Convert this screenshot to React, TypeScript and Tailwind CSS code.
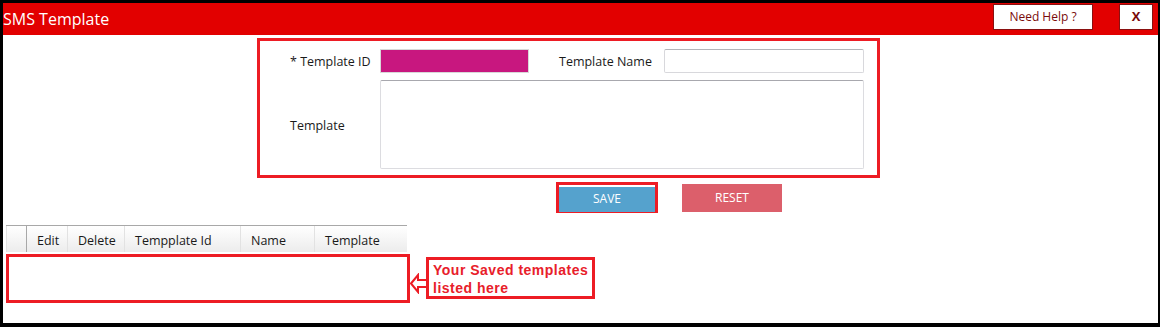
import { useState } from 'react';

const columns = [
  { label: '', width: 'w-[20px]' },
  { label: 'Edit', width: 'w-[41px]' },
  { label: 'Delete', width: 'w-[57px]' },
  { label: 'Tempplate Id', width: 'w-[116px]' },
  { label: 'Name', width: 'w-[74px]' },
  { label: 'Template', width: 'w-[93px]' },
];

export default function App() {
  const [name, setName] = useState('');
  const [body, setBody] = useState('');

  return (
    <div
      className="w-[1160px] h-[327px] bg-black pt-[3px] pl-[3px] pr-[2px] pb-[4px]"
      style={{ fontFamily: '"Open Sans", "Noto Sans", sans-serif' }}
    >
      <div className="h-full bg-white flex flex-col">
        {/* title bar */}
        <div className="h-[32px] shrink-0 bg-[#e20000] flex items-start pt-[1px] pr-[5px]">
          <h1 className="text-[16px] leading-[30px] text-white flex-1">SMS Template</h1>
          <button className="w-[100px] h-[26px] bg-white border border-[#8a1010] text-[12px] text-[#7a0a0a]">
            Need Help ?
          </button>
          <button className="ml-[26px] w-[34px] h-[26px] bg-white border border-[#8a1010] text-[13px] font-bold text-[#7a0a0a]">
            X
          </button>
        </div>

        {/* form */}
        <div className="ml-[254px] mt-[3px] w-[623px] h-[140px] border-[3px] border-[#ed1c24] pt-[8px] pl-[30px] text-[12.5px] text-[#1a1a1a]">
          <div className="flex items-center h-[24px]">
            <label className="w-[90px] pt-[3px]">* Template ID</label>
            <input className="w-[149px] h-[24px] border border-[#d8d8d8] bg-[#c8177f]" readOnly />
            <label className="ml-[30px] w-[105px] pt-[3px]">Template Name</label>
            <input
              value={name}
              onChange={e => setName(e.target.value)}
              className="w-[200px] h-[24px] border border-[#d8d8dc] border-t-[#b4b4b8] rounded-[2px] outline-none"
            />
          </div>
          <div className="flex items-center mt-[7px]">
            <label className="w-[90px] pt-[4px]">Template</label>
            <textarea
              value={body}
              onChange={e => setBody(e.target.value)}
              className="w-[484px] h-[89px] border border-[#dcdce0] border-t-[#a8a8ae] rounded-[2px] resize-none outline-none"
            />
          </div>
        </div>

        {/* actions */}
        <div className="flex items-center ml-[553px] mt-[4px]">
          <div className="w-[102px] h-[31px] border-[3px] border-[#ed1c24]">
            <button className="w-full h-full bg-[#55a2cd] text-white text-[12px]">SAVE</button>
          </div>
          <button className="ml-[24px] w-[100px] h-[28px] bg-[#dc5f6b] text-white text-[12px]">RESET</button>
        </div>

        {/* grid */}
        <div className="ml-[3px] mt-[12px] flex h-[27px] w-[401px] border-t border-[#a8a8a8] bg-gradient-to-b from-white to-[#ececec] text-[12.5px] text-[#1a1a1a]">
          {columns.map((c, i) => (
            <div
              key={i}
              className={`${c.width} flex items-center pl-[10px] pt-[5px] border-l ${i === 1 ? 'border-[#a8a8a8]' : 'border-[#e2e2e2]'} ${i === 0 ? 'border-[#c8c8c8]' : ''}`}
            >
              {c.label}
            </div>
          ))}
        </div>

        <div className="flex items-start mt-[2px]">
          <div className="ml-[3px] w-[404px] h-[49px] border-[3px] border-[#ed1c24]" />
          <svg width="19" height="21" viewBox="0 0 19 21" className="mt-[19px] -ml-[1px]">
            <polygon
              points="2,10.5 9,2 9,7 18,7 18,14 9,14 9,19"
              fill="white"
              stroke="#ed1c24"
              strokeWidth="2"
              strokeLinejoin="miter"
            />
          </svg>
          <div
            className="-ml-[2px] mt-[3px] w-[169px] h-[42px] border-[3px] border-[#ed1c24] pl-[4px] pt-[1px] text-[14px] leading-[18px] tracking-[0.5px] font-bold text-[#e8202a]"
            style={{ fontFamily: '"Liberation Sans", Arial, sans-serif' }}
          >
            Your Saved templates
            <br />
            listed here
          </div>
        </div>
      </div>
    </div>
  );
}
